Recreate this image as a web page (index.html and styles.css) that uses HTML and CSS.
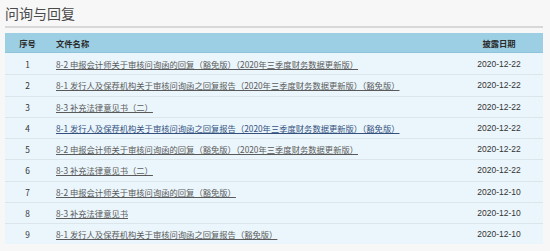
FILE: index.html
```html
<!DOCTYPE html>
<html lang="zh-CN">
<head>
<meta charset="utf-8">
<link rel="stylesheet" href="styles.css">
</head>
<body>
<div class="page">
  <h2 class="title">问询与回复</h2>
  <div class="rule"></div>
  <table class="list">
    <thead>
      <tr><th class="c-no">序号</th><th class="c-name">文件名称</th><th class="c-date">披露日期</th></tr>
    </thead>
    <tbody>
      <tr><td class="c-no">1</td><td class="c-name"><a href="#">8-2 申报会计师关于审核问询函的回复（豁免版）（2020年三季度财务数据更新版）</a></td><td class="c-date">2020-12-22</td></tr>
      <tr><td class="c-no">2</td><td class="c-name"><a href="#">8-1 发行人及保荐机构关于审核问询函之回复报告（2020年三季度财务数据更新版）（豁免版）</a></td><td class="c-date">2020-12-22</td></tr>
      <tr><td class="c-no">3</td><td class="c-name"><a href="#">8-3 补充法律意见书（二）</a></td><td class="c-date">2020-12-22</td></tr>
      <tr><td class="c-no">4</td><td class="c-name"><a href="#" class="visited">8-1 发行人及保荐机构关于审核问询函之回复报告（2020年三季度财务数据更新版）（豁免版）</a></td><td class="c-date">2020-12-22</td></tr>
      <tr><td class="c-no">5</td><td class="c-name"><a href="#">8-2 申报会计师关于审核问询函的回复（豁免版）（2020年三季度财务数据更新版）</a></td><td class="c-date">2020-12-22</td></tr>
      <tr><td class="c-no">6</td><td class="c-name"><a href="#">8-3 补充法律意见书（二）</a></td><td class="c-date">2020-12-22</td></tr>
      <tr><td class="c-no">7</td><td class="c-name"><a href="#">8-2 申报会计师关于审核问询函的回复（豁免版）</a></td><td class="c-date">2020-12-10</td></tr>
      <tr><td class="c-no">8</td><td class="c-name"><a href="#">8-3 补充法律意见书</a></td><td class="c-date">2020-12-10</td></tr>
      <tr><td class="c-no">9</td><td class="c-name"><a href="#">8-1 发行人及保荐机构关于审核问询函之回复报告（豁免版）</a></td><td class="c-date">2020-12-10</td></tr>
    </tbody>
  </table>
</div>
</body>
</html>
```
FILE: styles.css
```css
html, body {
  margin: 0;
  padding: 0;
  background: #f7f7f7;
}
.page {
  padding: 0 7px 0 5px;
  font-family: "Noto Sans CJK SC", "Liberation Sans", sans-serif;
}
.title {
  margin: 0;
  padding-top: 4px;
  height: 22px;
  font-size: 14px;
  line-height: 18px;
  font-weight: normal;
  color: #4a4a4a;
}
.rule {
  height: 2px;
  background: #d8d8d8;
  margin-bottom: 5px;
}
.list {
  width: 100%;
  border-collapse: collapse;
  font-size: 8.3px;
  color: #333;
}
.list th {
  height: 19px;
  padding: 0;
  background: #9ccfe3;
  border-bottom: 1px solid #8ec4da;
  font-weight: bold;
  color: #2a2a2a;
}
.list td {
  height: 20.25px;
  padding: 0;
  background: #ebf6fc;
  border-top: 1px solid #dbe5ea;
}
.list tbody tr:first-child td {
  border-top: none;
  height: 21.25px;
}
.c-no {
  width: 45px;
  text-align: center;
}
.c-name {
  text-align: left;
  padding-left: 6px !important;
}
.c-date {
  width: 88px;
  text-align: center;
  font-family: "Liberation Sans", sans-serif;
  font-size: 8.5px;
}
th.c-date {
  font-family: "Noto Sans CJK SC", sans-serif;
  font-size: 8.3px;
}
.list a {
  color: #5a5a5a;
  text-decoration: underline;
  text-underline-offset: 1px;
}
.list a.visited {
  color: #34517e;
}
```
